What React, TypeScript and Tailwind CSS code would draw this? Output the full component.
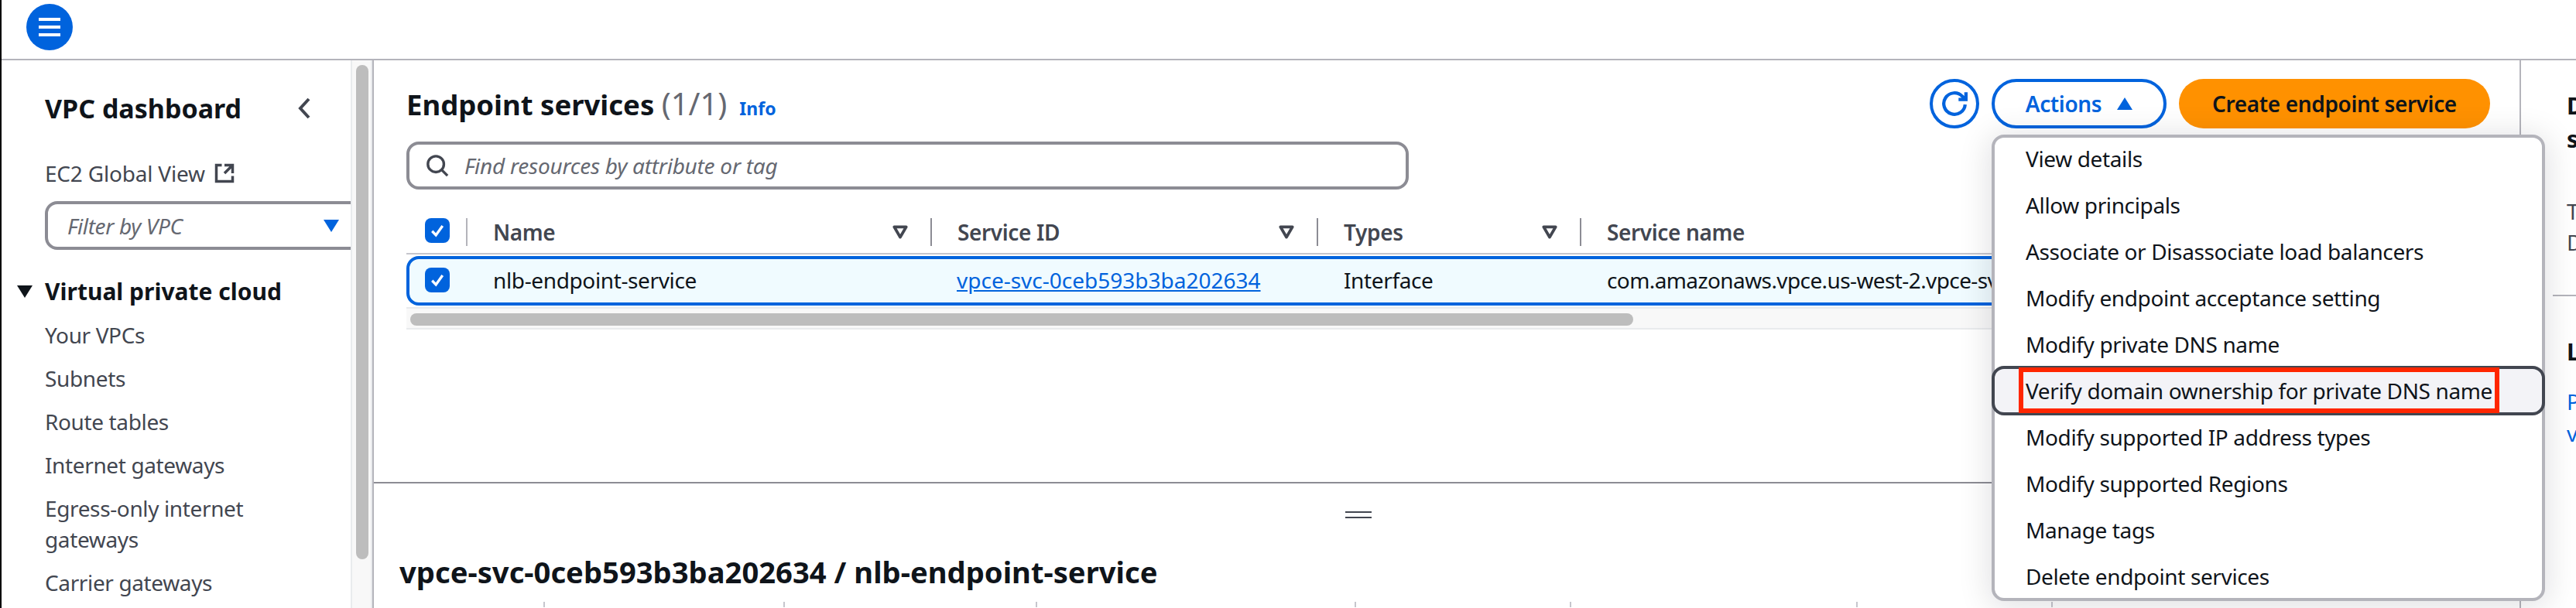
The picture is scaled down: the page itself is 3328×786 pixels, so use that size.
const menuItems = [
  'View details',
  'Allow principals',
  'Associate or Disassociate load balancers',
  'Modify endpoint acceptance setting',
  'Modify private DNS name',
  'Verify domain ownership for private DNS name',
  'Modify supported IP address types',
  'Modify supported Regions',
  'Manage tags',
  'Delete endpoint services',
];

const navItems = ['Your VPCs', 'Subnets', 'Route tables', 'Internet gateways', 'Egress-only internet gateways', 'Carrier gateways'];

function Check() {
  return (
    <span className="flex h-[32px] w-[32px] items-center justify-center rounded-lg bg-[#0063dd]">
      <svg viewBox="0 0 16 16" className="h-[24px] w-[24px]" fill="none" stroke="#fff" strokeWidth="2.2">
        <path d="M3.5 8.5 6.8 12 12.5 4" />
      </svg>
    </span>
  );
}

function SortCaret() {
  return (
    <svg viewBox="0 0 20 18" className="h-[20px] w-[22px]" fill="none" stroke="#424650" strokeWidth="3.5" strokeLinejoin="round">
      <path d="M3 3h14l-7 12z" />
    </svg>
  );
}

function HeaderCell({ label, sort, className }: { label: string; sort?: boolean; className: string }) {
  return (
    <div className={`flex h-[36px] items-center justify-between border-l-2 pl-[33px] pr-[28px] ${className}`}>
      <span>{label}</span>
      {sort && <SortCaret />}
    </div>
  );
}

function Nav() {
  return (
    <aside className="w-[451px] shrink-0 overflow-hidden pt-[40px]">
      <div className="flex items-center justify-between pl-[56px] pr-[52px]">
        <h2 className="text-[34px] leading-[44px] font-bold tracking-normal text-[#0f141a]">VPC dashboard</h2>
        <svg viewBox="0 0 16 28" className="h-[28px] w-[16px]" fill="none" stroke="#424650" strokeWidth="4">
          <path d="M14 2 3 14l11 12" />
        </svg>
      </div>
      <div className="mt-[42px] flex items-center gap-[11px] pl-[56px] text-[#424650]">
        <span className="leading-[40px] tracking-[-0.2px]">EC2 Global View</span>
        <svg viewBox="0 0 16 16" className="h-[28px] w-[28px]" fill="none" stroke="#424650" strokeWidth="2">
          <path d="M14 8V2H8M14 2 8 8M6 2H2v12h12v-4" />
        </svg>
      </div>
      <div className="mt-[16px] ml-[56px] flex h-[63px] w-[420px] items-center justify-between rounded-2xl border-4 border-[#8c8c94] pr-[36px] pl-[25px]">
        <span className="text-[#656871] italic">Filter by VPC</span>
        <svg viewBox="0 0 20 16" className="h-[16px] w-[20px]" fill="#0063dd">
          <path d="M0 0h20L10 16z" />
        </svg>
      </div>
      <div className="mt-[32px] flex items-center gap-[16px] pl-[20px]">
        <svg viewBox="0 0 20 16" className="h-[16px] w-[20px]" fill="#0f141a">
          <path d="M0 0h20L10 16z" />
        </svg>
        <span className="text-[30px] leading-[44px] font-bold tracking-normal text-[#0f141a]">Virtual private cloud</span>
      </div>
      <ul className="mt-[14px] flex w-[330px] flex-col gap-[16px] pl-[56px] leading-[40px] text-[#424650]">
        {navItems.map((item) => (
          <li key={item}>{item}</li>
        ))}
      </ul>
    </aside>
  );
}

function ActionsMenu() {
  return (
    <div className="absolute top-[72px] left-0 z-10 h-[603px] w-[715px] rounded-2xl border-4 border-[#b4b4bb] bg-white shadow-[0_4px_40px_4px_rgba(0,7,22,0.12)]">
      <ul className="-mt-[3px] text-[#0f141a]">
        {menuItems.map((item) =>
          item.startsWith('Verify') ? (
            <li
              key={item}
              className="relative -mx-[4px] -my-[2px] flex h-[64px] items-center rounded-2xl border-4 border-[#424650] bg-[#f3f3f7] pl-[40px]"
            >
              {item}
              <span className="absolute -top-[2px] left-[31px] h-[59px] w-[621px] border-[6px] border-[#ff2600]" />
            </li>
          ) : (
            <li key={item} className="flex h-[60px] items-center pl-[40px]">
              {item}
            </li>
          ),
        )}
      </ul>
    </div>
  );
}

function TopPanel() {
  return (
    <section className="h-[545px] pt-[24px] pr-[38px] pl-[42px]">
      <div className="flex h-[64px] items-center justify-between">
        <h1 className="text-[36.5px] font-bold tracking-normal text-[#0f141a]">
          Endpoint services <span className="text-[40px] font-normal text-[#656871]">(1/1)</span>
          <span className="ml-[16px] text-[23px] text-[#0063dd]">Info</span>
        </h1>
        <div className="flex items-center gap-[16px]">
          <button className="flex h-[64px] w-[64px] items-center justify-center rounded-full border-4 border-[#0063dd]">
            <svg viewBox="0 0 16 16" className="h-[34px] w-[34px]" fill="none" stroke="#0063dd" strokeWidth="2">
              <path d="M14.5 8.5A6.5 6.5 0 1 1 12.8 3.6L15 5.5" />
              <path d="M15 1v4.500h-4.500" />
            </svg>
          </button>
          <div className="relative">
            <button className="flex h-[64px] w-[226px] items-center justify-center gap-[20px] rounded-full border-4 border-[#0063dd] font-semibold text-[#0063dd]">
              Actions
              <svg viewBox="0 0 20 16" className="h-[16px] w-[20px]" fill="#0063dd">
                <path d="M10 0 20 16H0z" />
              </svg>
            </button>
            <ActionsMenu />
          </div>
          <button className="h-[64px] w-[402px] rounded-full bg-[#ff9100] font-semibold text-[#0f141a]">Create endpoint service</button>
        </div>
      </div>

      <div className="mt-[17px] flex h-[62px] w-[1295px] items-center gap-[20px] rounded-2xl border-4 border-[#8c8c94] pl-[21px]">
        <svg viewBox="0 0 16 16" className="h-[30px] w-[30px]" fill="none" stroke="#424650" strokeWidth="1.8">
          <circle cx="7" cy="7" r="5.500" />
          <path d="m15 15-4-4" />
        </svg>
        <span className="tracking-[-0.25px] text-[#656871] italic">Find resources by attribute or tag</span>
      </div>

      <div className="mt-[37px] grid h-[47px] grid-cols-[77px_600px_499px_340px_1fr] border-b-2 border-[#c6c6cd] font-semibold text-[#424650]">
        <div className="pl-[24px]">
          <Check />
        </div>
        <HeaderCell label="Name" sort className="border-[#b4b4bb]" />
        <HeaderCell label="Service ID" sort className="border-[#8c8c94]" />
        <HeaderCell label="Types" sort className="border-[#8c8c94]" />
        <HeaderCell label="Service name" className="border-[#8c8c94]" />
      </div>

      <div className="mt-[2px] grid h-[64px] grid-cols-[77px_600px_499px_340px_1fr] items-center overflow-hidden rounded-2xl bg-[#f0fbff] pb-[2px] text-[#0f141a] ring-4 ring-[#0063dd] ring-inset">
        <div className="pl-[24px]">
          <Check />
        </div>
        <div className="pl-[35px]">nlb-endpoint-service</div>
        <div className="pl-[34px] tracking-normal text-[#0063dd] underline">vpce-svc-0ceb593b3ba202634</div>
        <div className="pl-[35px]">Interface</div>
        <div className="w-[533px] overflow-hidden pl-[35px] tracking-[-0.6px] whitespace-nowrap">com.amazonaws.vpce.us-west-2.vpce-svc-0ceb593b3ba202634</div>
      </div>

      <div className="mt-[2px] h-[29px] border-y-2 border-[#e9ebed] bg-[#f8f8f8] pt-[6px] pl-[5px]">
        <div className="h-[16px] w-[1580px] rounded-lg bg-[#bdbdbd]" />
      </div>
    </section>
  );
}

function BottomPanel() {
  return (
    <section className="border-t-2 border-[#8c8c94] pt-[36px]">
      <div className="ml-[1255px] flex w-[34px] flex-col gap-[5px]">
        <span className="h-[2px] bg-[#424650]" />
        <span className="h-[2px] bg-[#424650]" />
      </div>
      <h2 className="mt-[47px] pl-[33px] text-[38.2px] leading-[44px] font-bold tracking-normal text-[#0f141a]">
        vpce-svc-0ceb593b3ba202634 / nlb-endpoint-service
      </h2>
      <div className="mt-[17px] ml-[219px] flex h-[7px]">
        <span className="w-[310px] border-l-2 border-[#c6c6cd]" />
        <span className="w-[326px] border-l-2 border-[#c6c6cd]" />
        <span className="w-[412px] border-l-2 border-[#c6c6cd]" />
        <span className="w-[278px] border-l-2 border-[#c6c6cd]" />
        <span className="w-[370px] border-l-2 border-[#c6c6cd]" />
        <span className="w-[252px] border-l-2 border-[#c6c6cd]" />
        <span className="w-[388px] border-l-2 border-[#c6c6cd]" />
      </div>
    </section>
  );
}

function HelpPanel() {
  return (
    <aside className="min-w-0 flex-1 overflow-hidden">
      <div className="pt-[37px] pl-[59px] text-[30px] leading-[43px] font-bold text-[#0f141a]">
        <div>D</div>
        <div>s</div>
      </div>
      <div className="mt-[52px] pl-[59px] leading-[40px] text-[#424650]">
        <div>T</div>
        <div>D</div>
      </div>
      <div className="mt-[48px] ml-[41px] h-[2px] bg-[#b4b4bb]" />
      <div className="mt-[50px] pl-[59px] text-[30px] leading-[44px] font-bold text-[#0f141a]">L</div>
      <div className="mt-[22px] pl-[59px] leading-[41px] text-[#0063dd]">
        <div>P</div>
        <div>v</div>
      </div>
    </aside>
  );
}

export default function App() {
  return (
    <div className="flex h-[786px] w-[3328px] flex-col overflow-hidden border-l-2 border-black bg-white font-['Noto_Sans',sans-serif] text-[28px] tracking-[-0.37px]">
      <header className="h-[78px] shrink-0 border-b-2 border-[#b4b4bb] pt-[5px] pl-[32px]">
        <button className="flex h-[60px] w-[60px] flex-col items-center justify-center gap-[6px] rounded-full bg-[#0063dd]">
          <span className="h-[4px] w-[28px] bg-white" />
          <span className="h-[4px] w-[28px] bg-white" />
          <span className="h-[4px] w-[28px] bg-white" />
        </button>
      </header>
      <div className="flex min-h-0 flex-1">
        <Nav />
        <div className="w-[28px] shrink-0 border-x-2 border-[#e9ebed] bg-[#f8f8f8] pt-[6px] pl-[5px]">
          <div className="h-[639px] w-[16px] rounded-lg bg-[#bdbdbd]" />
        </div>
        <main className="w-[2776px] shrink-0 border-x-2 border-[#b4b4bb]">
          <TopPanel />
          <BottomPanel />
        </main>
        <HelpPanel />
      </div>
    </div>
  );
}
